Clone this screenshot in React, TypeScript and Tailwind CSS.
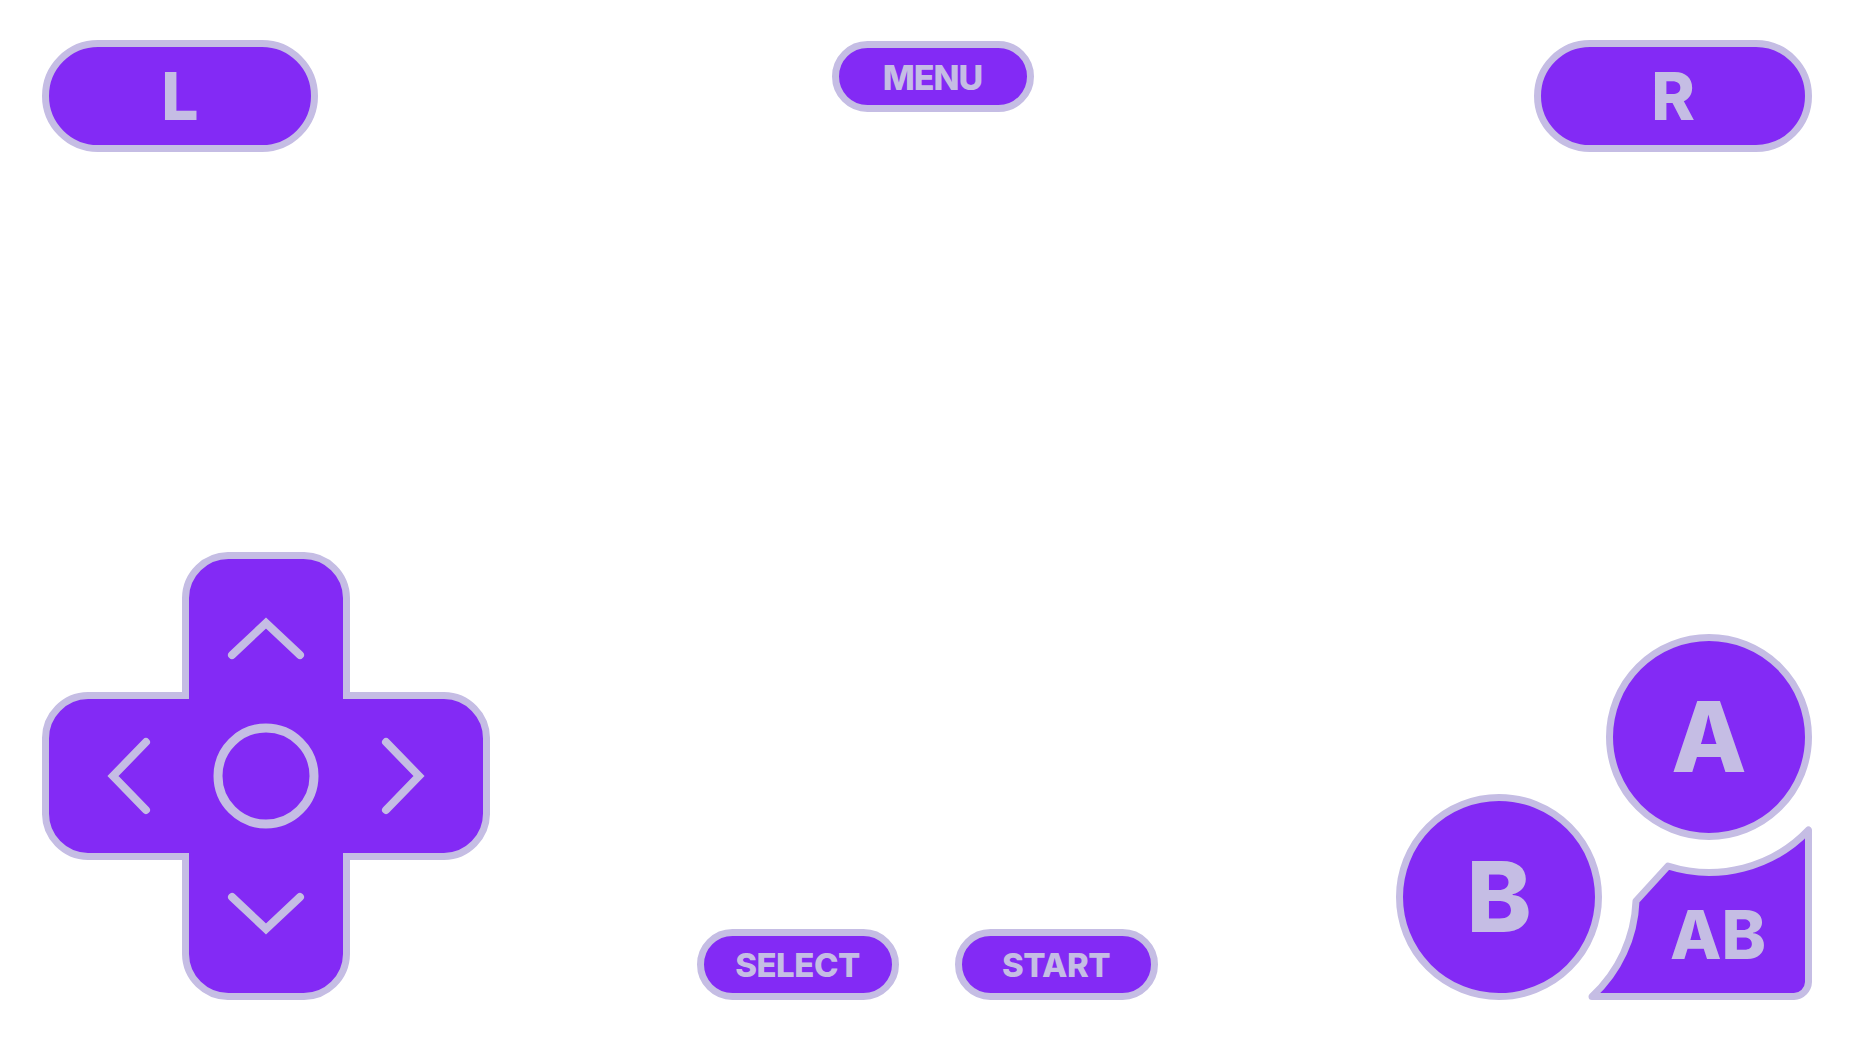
import React from 'react';

const FILL = '#832af5';
const EDGE = '#c5bde4';

const font = { fontFamily: 'Inter, "Liberation Sans", Arial, sans-serif' };

function PillButton({ label, className }: { label: string; className: string }) {
  return (
    <button
      className={`flex items-center justify-center rounded-full border-[7px] border-[#c5bde4] bg-[#832af5] font-extrabold leading-none text-[#c5bde4] ${className}`}
      style={font}
    >
      {label}
    </button>
  );
}

function DPad() {
  return (
    <svg width="448" height="448" viewBox="0 0 448 448">
      <path
        d="M 187 3.5 H 261 A 43 43 0 0 1 304.5 46 V 143.5 H 402 A 43 43 0 0 1 444.5 187 V 261 A 43 43 0 0 1 402 304.5 H 304.5 V 402 A 43 43 0 0 1 261 444.5 H 187 A 43 43 0 0 1 143.5 402 V 304.5 H 46 A 43 43 0 0 1 3.5 261 V 187 A 43 43 0 0 1 46 143.5 H 143.5 V 46 A 43 43 0 0 1 187 3.5 Z"
        fill={FILL}
        stroke={EDGE}
        strokeWidth="7"
      />
      <circle cx="224" cy="224" r="48" fill="none" stroke={EDGE} strokeWidth="9" />
      <g fill="none" stroke={EDGE} strokeWidth="8" strokeLinecap="round" strokeLinejoin="miter">
        <polyline points="190,103 224,71 258,103" />
        <polyline points="190,345 224,377 258,345" />
        <polyline points="104,190 71,224 104,258" />
        <polyline points="344,190 377,224 344,258" />
      </g>
    </svg>
  );
}

function FaceButtons() {
  return (
    <div className="relative h-[366px] w-[416px]" style={font}>
      <svg className="absolute left-0 top-0" width="416" height="366" viewBox="0 0 416 366">
        <path
          d="M 196 362.5 A 137 137 0 0 0 240 267 L 272 232 A 137 137 0 0 0 412.5 196 L 412.5 348 A 15 15 0 0 1 398 362.5 Z"
          fill={FILL}
          stroke={EDGE}
          strokeWidth="7"
          strokeLinejoin="round"
        />
      </svg>
      <div className="absolute left-[272px] top-[267px] w-[100px] text-center text-[67px] font-extrabold leading-none text-[#c5bde4]">
        AB
      </div>
      <button className="absolute right-0 top-0 flex h-[206px] w-[206px] items-center justify-center rounded-full border-[7px] border-[#c5bde4] bg-[#832af5] text-[98px] font-extrabold leading-none text-[#c5bde4]">
        A
      </button>
      <button className="absolute bottom-0 left-0 flex h-[206px] w-[206px] items-center justify-center rounded-full border-[7px] border-[#c5bde4] bg-[#832af5] text-[98px] font-extrabold leading-none text-[#c5bde4]">
        B
      </button>
    </div>
  );
}

export default function App() {
  return (
    <div className="flex h-screen w-full flex-col justify-between bg-white pb-[42px] pl-[42px] pr-[41px] pt-[40px]">
      <div className="grid grid-cols-[1fr_auto_1fr] items-start">
        <PillButton label="L" className="h-[112px] w-[276px] justify-self-start text-[66px]" />
        <PillButton label="MENU" className="ml-[11px] mt-px h-[71px] w-[202px] pt-[2px] text-[34px] tracking-[-1px]" />
        <PillButton label="R" className="h-[112px] w-[278px] justify-self-end text-[66px]" />
      </div>

      <div className="grid grid-cols-[1fr_auto_1fr] items-end">
        <div className="justify-self-start">
          <DPad />
        </div>
        <div className="flex gap-[56px]">
          <PillButton label="SELECT" className="h-[71px] w-[202px] pt-px text-[33px] tracking-[-0.5px]" />
          <PillButton label="START" className="h-[71px] w-[203px] pt-px text-[33px] tracking-[-0.5px]" />
        </div>
        <div className="justify-self-end">
          <FaceButtons />
        </div>
      </div>
    </div>
  );
}
